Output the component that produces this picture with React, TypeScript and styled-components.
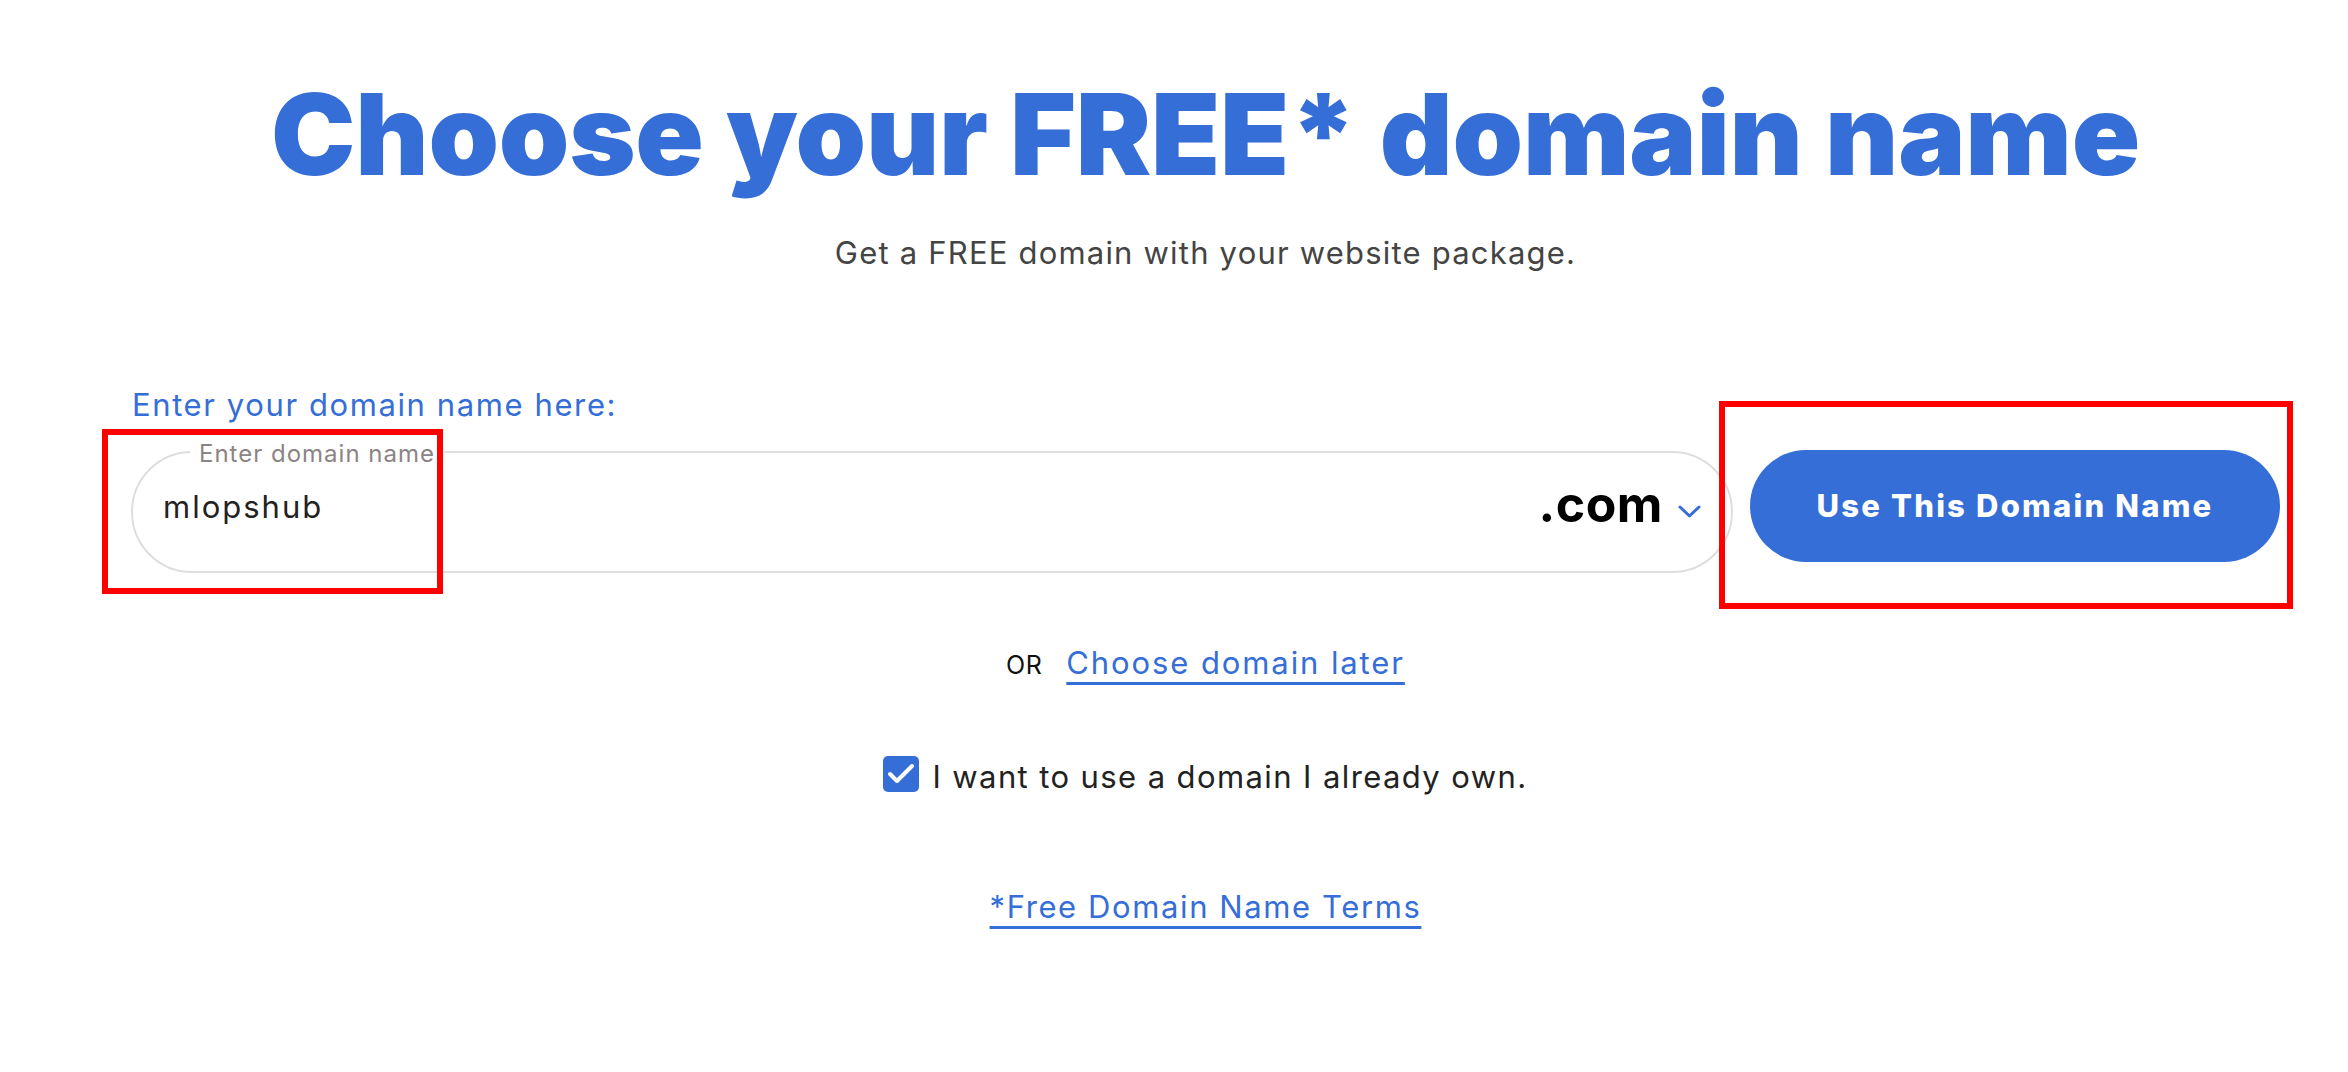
import React from "react";
import styled, { createGlobalStyle } from "styled-components";

const BLUE = "#356ed7";

const GlobalStyle = createGlobalStyle`
  html, body { margin: 0; padding: 0; background: #ffffff; }
  body { font-family: Inter, "Noto Sans", sans-serif; }
  * { box-sizing: border-box; }
`;

const Page = styled.main`
  display: flex;
  flex-direction: column;
  align-items: center;
  width: 2348px;
  min-height: 1072px;
  padding: 67px 0 0 63px;
`;

const Title = styled.h1`
  margin: 0;
  font-size: 113px;
  line-height: 1.2;
  font-weight: 900;
  color: ${BLUE};
  letter-spacing: -0.25px;
  white-space: nowrap;
`;

const Subtitle = styled.p`
  margin: 27px 0 0;
  font-size: 31px;
  line-height: 45px;
  letter-spacing: 1.2px;
  color: #444444;
`;

const Form = styled.section`
  width: 2149px;
  margin-top: 107px;
`;

const FieldLabel = styled.label`
  display: block;
  font-size: 31px;
  line-height: 45px;
  letter-spacing: 1.6px;
  color: ${BLUE};
  margin-bottom: 23px;
  padding-left: 1px;
`;

const Row = styled.div`
  position: relative;
  display: flex;
  align-items: flex-start;
`;

const DomainField = styled.div`
  position: relative;
  margin-top: 1px;
  width: 1602px;
  height: 122px;
  border: 2px solid #dedede;
  border-radius: 61px;
  display: flex;
  align-items: center;
  padding: 0 30px 10px 30px;
`;

const FloatLabel = styled.span`
  position: absolute;
  top: -11px;
  left: 57px;
  padding: 0 9px;
  background: #ffffff;
  font-size: 24px;
  line-height: 24px;
  letter-spacing: 1px;
  color: #8c8484;
  white-space: nowrap;
`;

const DomainInput = styled.input`
  flex: 1;
  min-width: 0;
  border: none;
  outline: none;
  background: transparent;
  padding: 0;
  height: 45px;
  font-family: inherit;
  font-size: 31px;
  letter-spacing: 2px;
  color: #222222;
`;

const Tld = styled.span`
  font-size: 50px;
  line-height: 45px;
  font-weight: 700;
  color: #000000;
  letter-spacing: 0.5px;
  margin-bottom: 4px;
`;

const Chevron = styled.svg`
  margin: 10px 0 0 15px;
  flex: none;
`;

const UseButton = styled.button`
  margin-left: 17px;
  width: 530px;
  height: 112px;
  border: none;
  border-radius: 56px;
  background: ${BLUE};
  color: #ffffff;
  font-family: inherit;
  font-size: 31px;
  font-weight: 800;
  letter-spacing: 2.2px;
  cursor: pointer;
`;

const Annotation = styled.div<{ $l: number; $t: number; $w: number; $h: number }>`
  position: absolute;
  left: ${(p) => p.$l}px;
  top: ${(p) => p.$t}px;
  width: ${(p) => p.$w}px;
  height: ${(p) => p.$h}px;
  border: 6px solid #ff0000;
  pointer-events: none;
`;

const OrRow = styled.div`
  margin-top: 67px;
  display: flex;
  align-items: baseline;
  gap: 24px;
  line-height: 45px;
`;

const OrText = styled.span`
  font-size: 25px;
  letter-spacing: 0.5px;
  color: #111111;
`;

const TextLink = styled.a<{ $spacing: number }>`
  font-size: 31px;
  line-height: 45px;
  letter-spacing: ${(p) => p.$spacing}px;
  color: ${BLUE};
  text-decoration: underline;
  text-decoration-thickness: 3px;
  text-underline-offset: 8px;
  cursor: pointer;
`;

const CheckRow = styled.label`
  margin-top: 66px;
  display: flex;
  align-items: center;
  gap: 13px;
  font-size: 31px;
  line-height: 45px;
  letter-spacing: 1.4px;
  color: #222222;
`;

const CheckBox = styled.span`
  width: 36px;
  height: 36px;
  border-radius: 5px;
  background: ${BLUE};
  display: flex;
  align-items: center;
  justify-content: center;
  margin-bottom: 4px;
`;

const TermsRow = styled.div`
  margin-top: 85px;
`;

export default function App() {
  return (
    <>
      <GlobalStyle />
      <Page>
        <Title>Choose your FREE* domain name</Title>
        <Subtitle>Get a FREE domain with your website package.</Subtitle>
        <Form>
          <FieldLabel htmlFor="domain">Enter your domain name here:</FieldLabel>
          <Row>
            <DomainField>
              <FloatLabel>Enter domain name</FloatLabel>
              <DomainInput id="domain" defaultValue="mlopshub" />
              <Tld>.com</Tld>
              <Chevron width="23" height="13" viewBox="0 0 23 13">
                <polyline points="2,2 11.5,11 21,2" fill="none" stroke={BLUE} strokeWidth="3" strokeLinecap="round" strokeLinejoin="round" />
              </Chevron>
            </DomainField>
            <UseButton>Use This Domain Name</UseButton>
            <Annotation $l={-29} $t={-21} $w={341} $h={165} />
            <Annotation $l={1588} $t={-49} $w={574} $h={208} />
          </Row>
        </Form>
        <OrRow>
          <OrText>OR</OrText>
          <TextLink $spacing={1.9}>Choose domain later</TextLink>
        </OrRow>
        <CheckRow>
          <CheckBox>
            <svg width="36" height="36" viewBox="0 0 36 36">
              <polyline points="7,18 14,25 29,10" fill="none" stroke="#ffffff" strokeWidth="4" strokeLinecap="round" strokeLinejoin="round" />
            </svg>
          </CheckBox>
          I want to use a domain I already own.
        </CheckRow>
        <TermsRow>
          <TextLink $spacing={1.6}>*Free Domain Name Terms</TextLink>
        </TermsRow>
      </Page>
    </>
  );
}
